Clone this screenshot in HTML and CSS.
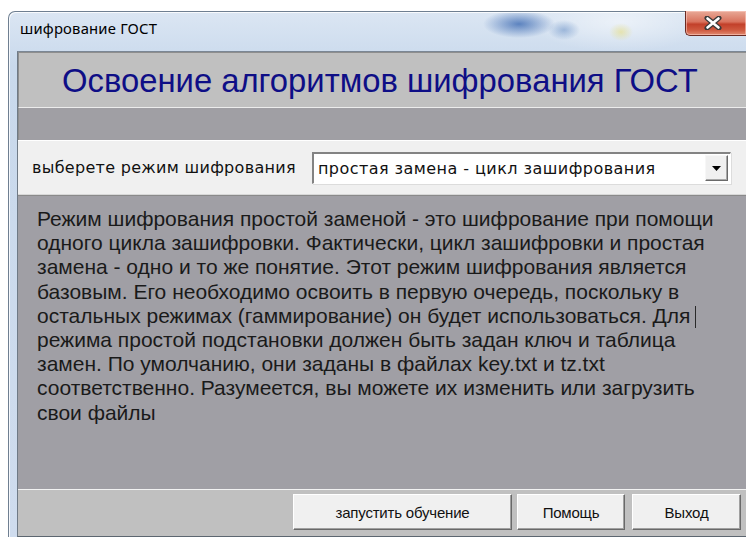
FILE: index.html
```html
<!DOCTYPE html>
<html lang="ru">
<head>
<meta charset="utf-8">
<title>шифрование ГОСТ</title>
<link rel="stylesheet" href="styles.css">
</head>
<body>
<div class="window">
  <div class="titlebar">
    <span class="caption">шифрование ГОСТ</span>
    <button class="close" type="button" aria-label="Закрыть">
      <svg width="18" height="14" viewBox="0 0 18 14">
        <path d="M3 2 L15 12 M15 2 L3 12" stroke="#3a3a3a" stroke-width="5" stroke-linecap="round"/>
        <path d="M3.5 2.5 L14.5 11.5 M14.5 2.5 L3.5 11.5" stroke="#ffffff" stroke-width="2.6" stroke-linecap="round"/>
      </svg>
    </button>
  </div>
  <div class="client">
    <div class="header">Освоение алгоритмов шифрования ГОСТ</div>
    <div class="band"></div>
    <div class="mode-row">
      <span class="mode-label">выберете режим шифрования</span>
      <div class="combo">
        <span class="combo-value">простая замена - цикл зашифрования</span>
        <span class="combo-arrow">
          <svg width="9" height="5" viewBox="0 0 9 5"><path d="M0 0 H9 L4.5 5 Z" fill="#000"/></svg>
        </span>
      </div>
    </div>
    <div class="description">
      <p class="desc-text">Режим шифрования простой заменой - это шифрование при помощи<br>одного цикла зашифровки. Фактически, цикл зашифровки и простая<br>замена - одно и то же понятие. Этот режим шифрования является<br>базовым. Его необходимо освоить в первую очередь, поскольку в<br>остальных режимах (гаммирование) он будет использоваться. Для<span class="caret"></span><br>режима простой подстановки должен быть задан ключ и таблица<br>замен. По умолчанию, они заданы в файлах key.txt и tz.txt<br>соответственно. Разумеется, вы можете их изменить или загрузить<br>свои файлы</p>
    </div>
    <div class="actions">
      <button class="btn btn-wide" type="button">запустить обучение</button>
      <button class="btn" type="button">Помощь</button>
      <button class="btn btn-exit" type="button">Выход</button>
    </div>
  </div>
</div>
</body>
</html>
```

FILE: styles.css
```css
html, body {
  margin: 0;
  padding: 0;
  background: #ffffff;
  overflow: hidden;
}

body {
  width: 746px;
  height: 537px;
}

/* window frame with the glass caption area */
.window {
  margin: 11px 0 0 8px;
  width: 738px;
  height: 534px;
  border-top-left-radius: 7px;
  border: 1px solid #6f7f91;
  border-right: none;
  border-bottom: none;
  background:
    radial-gradient(ellipse 36px 14px at 510px 12px, rgba(40, 90, 170, 0.7), rgba(40, 90, 170, 0) 100%),
    radial-gradient(ellipse 16px 10px at 555px 18px, rgba(60, 110, 180, 0.4), rgba(60, 110, 180, 0) 100%),
    radial-gradient(ellipse 12px 9px at 612px 20px, rgba(230, 220, 120, 0.55), rgba(230, 220, 120, 0) 100%),
    radial-gradient(ellipse 90px 30px at 610px 10px, rgba(255, 255, 255, 0.5), rgba(255, 255, 255, 0) 100%),
    linear-gradient(180deg, #dbe6f3 0%, #c9d9ec 10%, #cfdcee 100%);
  box-sizing: border-box;
  display: flex;
  flex-direction: column;
  padding-left: 8px;
  padding-bottom: 8px;
  box-shadow: inset 1px 1px 0 rgba(255, 255, 255, 0.8);
}

.titlebar {
  height: 39px;
  display: flex;
  align-items: flex-start;
  justify-content: space-between;
  flex-shrink: 0;
}

.caption {
  font-family: "Noto Sans", "Open Sans", sans-serif;
  font-size: 14.8px;
  color: #000000;
  margin-top: 6px;
  margin-left: 3px;
  letter-spacing: 0.2px;
}

.close {
  width: 61px;
  height: 25px;
  margin: -1px 0 0 0;
  border: 1px solid #6b2a22;
  border-top: none;
  border-right: none;
  border-radius: 0 0 0 5px;
  background: linear-gradient(180deg, #e8a997 0%, #d9735e 45%, #c2402a 55%, #cf5a40 80%, #e08a70 100%);
  box-shadow: inset 0 0 0 1px rgba(255, 210, 200, 0.55);
  padding: 0 6px 0 0;
  display: flex;
  align-items: center;
  justify-content: center;
}

.client {
  flex: 1;
  background: #c0c0c0;
  border-top: 1px solid #7b8795;
  border-left: 1px solid #6f7a86;
  border-bottom: 1px solid #5c6670;
  display: flex;
  flex-direction: column;
}

.header {
  height: 56px;
  flex-shrink: 0;
  box-sizing: border-box;
  border-top: 1px solid #8e8e8e;
  border-left: 1px solid #8e8e8e;
  border-bottom: 1px solid #ececec;
  font-family: "Liberation Sans", Arial, sans-serif;
  font-size: 32.8px;
  color: #0e0e86;
  display: flex;
  align-items: center;
  padding-left: 43px;
  padding-top: 1px;
  white-space: nowrap;
}

.band {
  height: 32px;
  flex-shrink: 0;
  background: #a09fa4;
  border-left: 1px solid #8e8e8e;
}

.mode-row {
  height: 55px;
  flex-shrink: 0;
  box-sizing: border-box;
  background: #f0f0f0;
  border-top: 1px solid #ffffff;
  border-bottom: 1px solid #d8d8d8;
  display: flex;
  align-items: center;
  padding-left: 14px;
  gap: 16px;
}

.mode-label {
  font-family: "DejaVu Sans", Verdana, sans-serif;
  font-size: 16px;
  color: #111111;
  letter-spacing: 0.3px;
  white-space: nowrap;
}

.combo {
  width: 419px;
  height: 32px;
  box-sizing: border-box;
  background: #ffffff;
  border-top: 2px solid #838383;
  border-left: 2px solid #838383;
  border-right: 1px solid #ffffff;
  border-bottom: 1px solid #ffffff;
  box-shadow: 1px 1px 0 #dcdcdc;
  display: flex;
  align-items: center;
  justify-content: space-between;
  padding: 0 2px 0 4px;
}

.combo-value {
  font-family: "DejaVu Sans", Verdana, sans-serif;
  font-size: 16px;
  color: #111111;
  letter-spacing: 0.45px;
  white-space: nowrap;
}

.combo-arrow {
  width: 23px;
  height: 26px;
  box-sizing: border-box;
  background: #f0f0f0;
  border-top: 1px solid #f7f7f7;
  border-left: 1px solid #f7f7f7;
  border-right: 1px solid #6a6a6a;
  border-bottom: 1px solid #6a6a6a;
  box-shadow: inset -1px -1px 0 #a8a8a8;
  display: flex;
  align-items: center;
  justify-content: center;
}

.description {
  height: 294px;
  flex-shrink: 0;
  box-sizing: border-box;
  background: #a09fa5;
  border-top: 1px solid #8a8a8a;
  padding: 11px 0 0 19px;
}

.desc-text {
  margin: 0;
  font-family: "Liberation Sans", Arial, sans-serif;
  font-size: 21px;
  line-height: 24.2px;
  color: #1a1a1a;
  white-space: nowrap;
}

.caret {
  display: inline-block;
  width: 0;
  height: 22px;
  border-left: 1px solid #2a2a2a;
  margin-left: 5px;
  vertical-align: -5px;
}

.actions {
  flex: 1;
  background: #c0c0c0;
  border-top: 1px solid #f2f2f2;
  display: flex;
  align-items: flex-start;
  padding: 4px 0 0 275px;
  gap: 5px;
}

.btn {
  height: 36px;
  width: 108px;
  box-sizing: border-box;
  background: #f0f0f0;
  border-top: 1px solid #ffffff;
  border-left: 1px solid #ffffff;
  border-right: 1px solid #696969;
  border-bottom: 1px solid #696969;
  box-shadow: inset -1px -1px 0 #a0a0a0;
  font-family: "Liberation Sans", Arial, sans-serif;
  font-size: 15px;
  color: #111111;
  padding: 0;
  letter-spacing: -0.2px;
}

.btn-wide {
  width: 219px;
}

.btn-exit {
  width: 109px;
  margin-left: 2px;
}
```
